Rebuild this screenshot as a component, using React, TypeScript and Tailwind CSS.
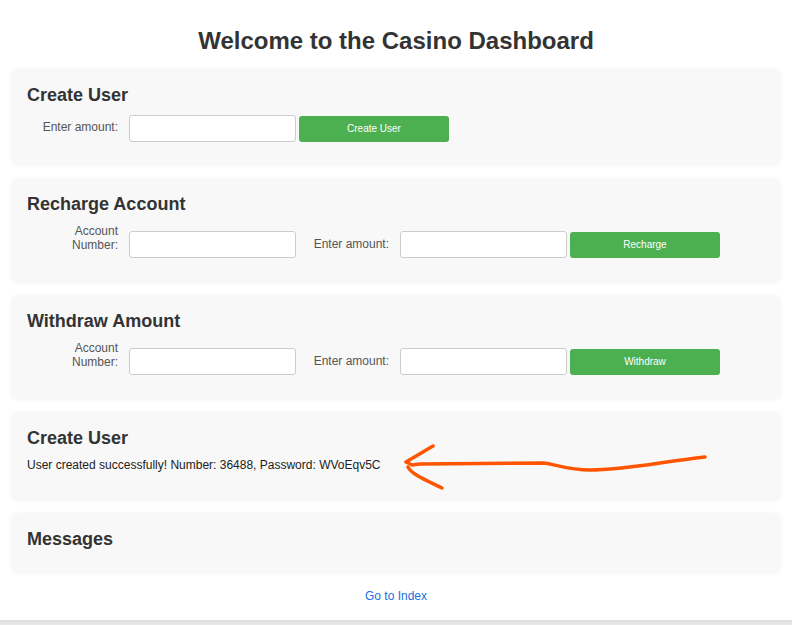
import React from "react";

const labelCls = "w-[91px] shrink-0 text-right text-[12px] leading-[14px] text-[#555]";
const inputCls = "w-[167px] h-[27px] shrink-0 border border-[#ccc] rounded-[3px] bg-white";
const btnCls = "w-[150px] h-[26px] shrink-0 ml-[3px] rounded-[3px] bg-[#4caf50] text-white text-[10px] leading-[26px] text-center";

function Card({ children, pb }: { children: React.ReactNode; pb: string }) {
  return (
    <div className={`rounded-[5px] bg-[#f8f8f8] shadow-[0_0_4px_rgba(0,0,0,0.07)] pt-[15px] px-[15px] ${pb}`}>
      {children}
    </div>
  );
}

function Heading({ children, mb = "mb-[9px]" }: { children: React.ReactNode; mb?: string }) {
  return <h3 className={`text-[18px] leading-[21px] font-bold text-[#333] ${mb}`}>{children}</h3>;
}

function AccountRow({ button }: { button: string }) {
  return (
    <div className="flex items-start">
      <label className={labelCls}>
        Account
        <br />
        Number:
      </label>
      <input className={`${inputCls} ml-[11px] mt-[7px]`} />
      <label className={`${labelCls} ml-[2px] mt-[13px]`}>Enter amount:</label>
      <input className={`${inputCls} ml-[11px] mt-[7px]`} />
      <button className={`${btnCls} mt-[8px]`}>{button}</button>
    </div>
  );
}

export default function App() {
  return (
    <div className="relative h-[625px] bg-[#e8e8e8] font-['Liberation_Sans',Arial,sans-serif] overflow-hidden">
      <div className="h-[620px] bg-white px-[12px] pt-[27px] shadow-[0_1px_4px_rgba(0,0,0,0.08)]">
        <h1 className="text-center text-[24px] leading-[28px] font-bold text-[#333] mb-[15px]">
          Welcome to the Casino Dashboard
        </h1>
        <div className="flex flex-col gap-[14px]">
          <Card pb="pb-[23px]">
            <Heading>Create User</Heading>
            <div className="flex items-start">
              <label className={`${labelCls} mt-[5px]`}>Enter amount:</label>
              <input className={`${inputCls} ml-[11px]`} />
              <button className={`${btnCls} mt-[1px]`}>Create User</button>
            </div>
          </Card>
          <Card pb="pb-[24px]">
            <Heading>Recharge Account</Heading>
            <AccountRow button="Recharge" />
          </Card>
          <Card pb="pb-[24px]">
            <Heading>Withdraw Amount</Heading>
            <AccountRow button="Withdraw" />
          </Card>
          <Card pb="pb-[28px]">
            <Heading>Create User</Heading>
            <p className="mt-[3px] text-[12px] leading-[14px] text-[#222]">
              User created successfully! Number: 36488, Password: WVoEqv5C
            </p>
          </Card>
          <Card pb="pb-[23px]">
            <Heading mb="mb-0">Messages</Heading>
          </Card>
        </div>
        <div className="mt-[16px] text-center text-[12px] leading-[14px]">
          <a href="#" className="text-[#1a6fe0]">Go to Index</a>
        </div>
      </div>
      <svg
        className="absolute inset-0 pointer-events-none"
        width="792"
        height="625"
        viewBox="0 0 792 625"
        fill="none"
      >
        <path
          d="M433 446 L406 462 L412 465 L420 464 L543 463 C555 464 568 470 590 470 C625 470 660 462 705 457"
          stroke="#ff5500"
          strokeWidth="3.5"
          strokeLinecap="round"
          strokeLinejoin="round"
        />
        <path
          d="M408 467 C412 475 428 481 442 488"
          stroke="#ff5500"
          strokeWidth="3.5"
          strokeLinecap="round"
          strokeLinejoin="round"
        />
      </svg>
    </div>
  );
}
